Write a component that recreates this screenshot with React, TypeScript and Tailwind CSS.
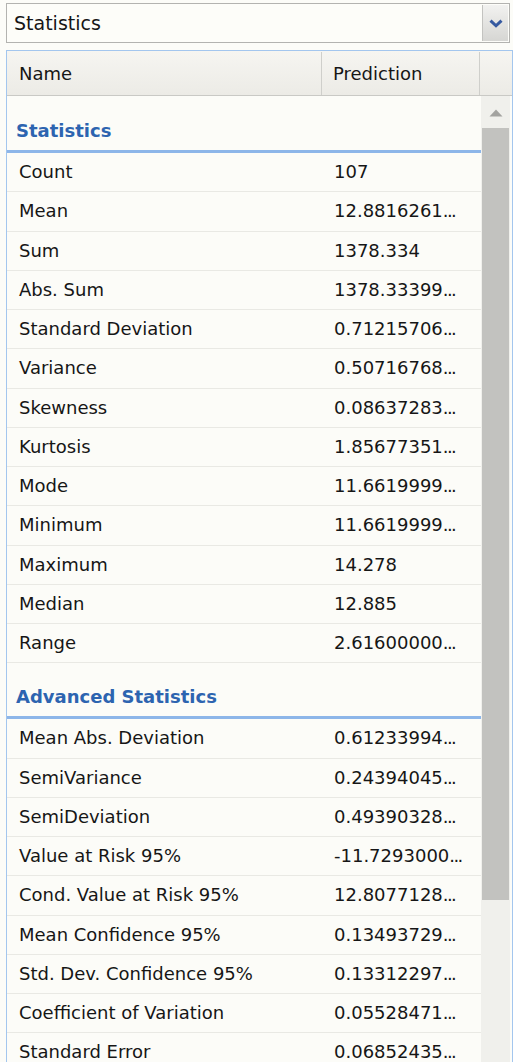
import React from "react";

type Row = [string, string, boolean?];

const stats: Row[] = [
  ["Count", "107"],
  ["Mean", "12.8816261", true],
  ["Sum", "1378.334"],
  ["Abs. Sum", "1378.33399", true],
  ["Standard Deviation", "0.71215706", true],
  ["Variance", "0.50716768", true],
  ["Skewness", "0.08637283", true],
  ["Kurtosis", "1.85677351", true],
  ["Mode", "11.6619999", true],
  ["Minimum", "11.6619999", true],
  ["Maximum", "14.278"],
  ["Median", "12.885"],
  ["Range", "2.61600000", true],
];

const adv: Row[] = [
  ["Mean Abs. Deviation", "0.61233994", true],
  ["SemiVariance", "0.24394045", true],
  ["SemiDeviation", "0.49390328", true],
  ["Value at Risk 95%", "-11.7293000", true],
  ["Cond. Value at Risk 95%", "12.8077128", true],
  ["Mean Confidence 95%", "0.13493729", true],
  ["Std. Dev. Confidence 95%", "0.13312297", true],
  ["Coefficient of Variation", "0.05528471", true],
  ["Standard Error", "0.06852435", true],
];

function DataRow({ r }: { r: Row }) {
  return (
    <div className="flex h-[39.25px] items-center border-b border-[#e9e9e4] text-[18px] leading-[22px] text-[#161616]">
      <div className="w-[315px] shrink-0 pl-[12px] whitespace-nowrap">{r[0]}</div>
      <div className="pl-[12px] whitespace-nowrap">
        {r[1]}
        {r[2] ? <span className="tracking-[-1.6px]">...</span> : null}
      </div>
    </div>
  );
}

function Group({ title, rows, h }: { title: string; rows: Row[]; h: string }) {
  return (
    <div>
      <div className={`flex ${h} items-end border-b-[3px] border-[#8db6e9] pb-[8px] pl-[9px] text-[18px] font-bold leading-[22px] text-[#2d64b0]`}>
        {title}
      </div>
      {rows.map((r) => (
        <DataRow key={r[0]} r={r} />
      ))}
    </div>
  );
}

export default function App() {
  return (
    <div
      className="h-[1062px] w-[513px] overflow-hidden bg-[#fcfcf8]"
      style={{ fontFamily: '"DejaVu Sans", Verdana, sans-serif' }}
    >
      {/* Dropdown */}
      <div className="ml-[6px] mr-[3px] mt-[3px] flex h-[40px] border border-[#b3b3b0] bg-[#fdfdf9]">
        <div className="flex flex-1 items-center pl-[7px] text-[19px] text-[#161616]">Statistics</div>
        <div className="my-[1px] mr-[1px] flex w-[26px] items-center justify-center border-l border-[#c3c3c0] bg-gradient-to-b from-[#f2f2f0] to-[#d6d6d3]">
          <svg width="14" height="9" viewBox="0 0 14 9">
            <path d="M1.5 1.6 L7 6.8 L12.5 1.6" fill="none" stroke="#3559a0" strokeWidth="3" />
          </svg>
        </div>
      </div>

      {/* Table */}
      <div className="ml-[6px] mt-[7px] flex h-[1020px] flex-col border border-b-0 border-[#a3c6ee]">
        <div className="flex h-[45px] shrink-0 border-b border-[#c9c9c5] bg-gradient-to-b from-[#f6f5f1] to-[#ecebe6] pt-[1px] text-[18px] text-[#161616]">
          <div className="flex w-[315px] items-center border-r border-[#cfcfcb] pl-[12px]">Name</div>
          <div className="flex w-[158px] items-center border-r border-[#cfcfcb] pl-[11px]">Prediction</div>
          <div className="flex-1" />
        </div>
        <div className="flex flex-1 overflow-hidden">
          <div className="w-[474px] shrink-0">
            <Group title="Statistics" rows={stats} h="h-[57px]" />
            <Group title="Advanced Statistics" rows={adv} h="h-[56px]" />
          </div>
          <div className="flex w-[29px] flex-col bg-[#f0f0ec]">
            <div className="flex h-[32px] items-center justify-center pt-[2px]">
              <svg width="14" height="8" viewBox="0 0 14 8">
                <path d="M7 0.5 L13.5 7.5 L0.5 7.5 Z" fill="#a3a3a0" />
              </svg>
            </div>
            <div className="mx-[1px] h-[772px] bg-[#c2c2bf]" />
            <div className="flex-1" />
            <div className="flex h-[10px] items-end justify-center">
              <div className="h-[3px] w-[10px] bg-[#a3a3a0]" />
            </div>
          </div>
        </div>
      </div>
    </div>
  );
}
